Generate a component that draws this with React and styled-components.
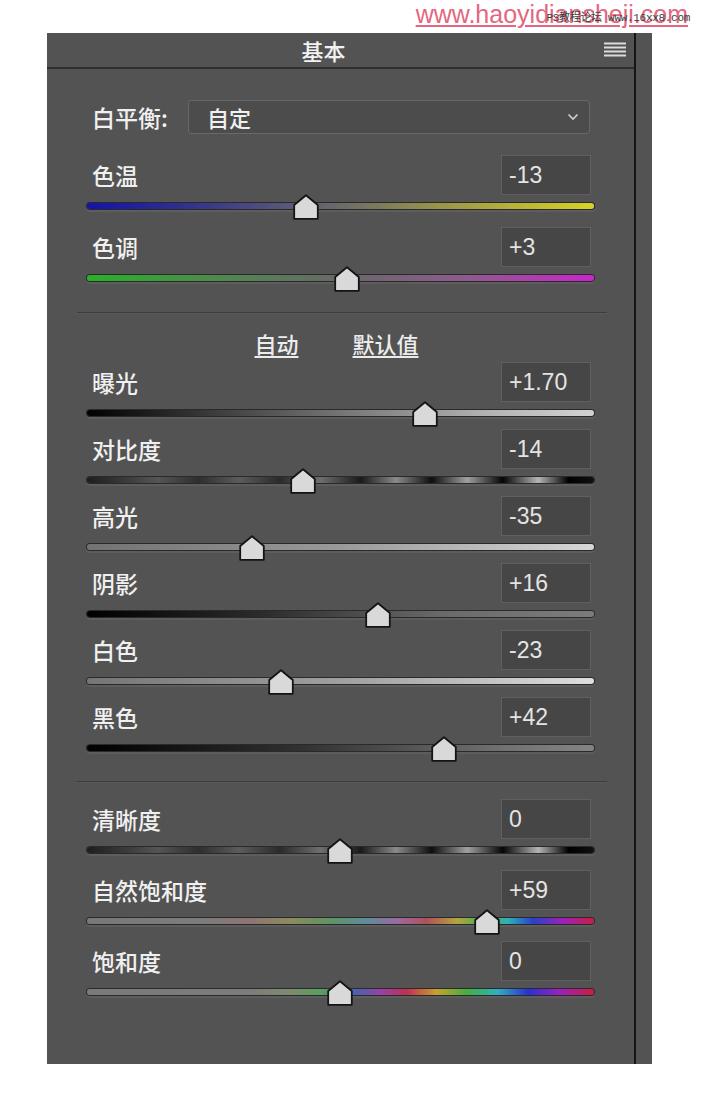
import React from 'react';
import styled, { createGlobalStyle } from 'styled-components';

const GlobalStyle = createGlobalStyle`
  body {
    margin: 0;
    background: #fff;
    font-family: "Noto Sans CJK SC", "Noto Sans", sans-serif;
  }
`;

const Page = styled.div`
  width: 704px;
  height: 1116px;
  background: #fff;
`;

const TopBar = styled.div`
  position: relative;
  height: 33px;
  display: flex;
  justify-content: flex-end;
  padding-right: 16px;
  box-sizing: border-box;
`;

const SiteMark = styled.div`
  font-family: "Liberation Sans", Arial, sans-serif;
  font-size: 25px;
  line-height: 29px;
  color: #e4677f;
  text-decoration: underline;
  text-decoration-thickness: 2px;
  text-underline-offset: 2px;
`;

const ForumMark = styled.div`
  position: absolute;
  right: 14px;
  top: 8px;
  font-family: "Liberation Mono", "Noto Sans CJK SC", monospace;
  font-size: 11px;
  color: #3c3c3c;
  letter-spacing: -0.3px;
`;

const Panel = styled.div`
  margin-left: 47px;
  width: 605px;
  display: flex;
  background: #535353;
`;

const Main = styled.div`
  width: 589px;
  box-sizing: border-box;
  border-right: 2px solid #161616;
  display: flex;
  flex-direction: column;
`;

const Strip = styled.div`
  flex: 1;
`;

const Header = styled.div`
  height: 34px;
  border-bottom: 2px solid #2e2e2e;
  display: flex;
  align-items: center;
`;

const Title = styled.div`
  flex: 1;
  text-align: center;
  font-size: 22px;
  color: #f2f2f2;
  font-weight: 500;
  padding-right: 4px;
`;

const MenuIcon = styled.svg`
  width: 22px;
  height: 16px;
  margin-right: 8px;
`;

const Body = styled.div`
  padding: 31px 40px 58px;
`;

const WBRow = styled.div`
  display: flex;
  align-items: center;
  height: 34px;
  padding: 0 4px 0 5px;
`;

const Label = styled.div`
  font-size: 23px;
  font-weight: 500;
  color: #f0f0f0;
  white-space: nowrap;
`;

const WBLabel = styled(Label)`
  width: 96px;
`;

const Dropdown = styled.div`
  flex: 1;
  height: 34px;
  box-sizing: border-box;
  border: 1px solid #686868;
  border-radius: 3px;
  background: #4c4c4c;
  display: flex;
  align-items: center;
  justify-content: space-between;
  padding: 0 10px 0 18px;
  font-size: 22px;
  font-weight: 500;
  color: #f0f0f0;
`;

const Sliders = styled.div`
  display: flex;
  flex-direction: column;
  gap: ${p => p.$gap}px;
  margin-top: ${p => p.$top}px;
`;

const Row = styled.div`
  display: flex;
  flex-direction: column;
`;

const RowHead = styled.div`
  display: flex;
  justify-content: space-between;
  align-items: center;
  height: 40px;
  padding: 0 3px 0 5px;
`;

const ValueBox = styled.div`
  width: 90px;
  height: 40px;
  box-sizing: border-box;
  background: #464646;
  border: 1px solid #606060;
  display: flex;
  align-items: center;
  padding-left: 7px;
  font-family: "Liberation Sans", Arial, sans-serif;
  font-size: 23px;
  color: #e4e4e4;
`;

const TrackWrap = styled.div`
  position: relative;
  height: 25px;
  padding-top: 8px;
  box-sizing: border-box;
`;

const Track = styled.div`
  height: 6px;
  border-radius: 3px;
  background: ${p => p.$bg};
  box-shadow: 0 0 0 1px #2a2a2a, 0 2px 0 1px rgba(255, 255, 255, 0.06);
`;

const Thumb = styled.svg`
  position: absolute;
  top: -1px;
  width: 26px;
  height: 26px;
  margin-left: -13px;
`;

const Divider = styled.div`
  height: 1px;
  margin: ${p => p.$top}px -13px 0 -10px;
  background: #3c3c3c;
  box-shadow: 0 1px 0 #5a5a5a;
`;

const Links = styled.div`
  margin-top: 18px;
  height: 24px;
  display: flex;
  justify-content: center;
  gap: 54px;
  padding-right: 8px;
`;

const Link = styled.span`
  font-size: 22px;
  line-height: 24px;
  font-weight: 500;
  color: #ececec;
  text-decoration: underline;
  text-underline-offset: 3px;
`;

const stripes =
  'linear-gradient(90deg, #1e1e1e 0%, #3c3c3c 8%, #555 14%, #2e2e2e 22%, #5c5c5c 30%, #2a2a2a 38%, #6e6e6e 46%, #1a1a1a 54%, #8a8a8a 61%, #0e0e0e 68%, #a0a0a0 75%, #050505 82%, #b4b4b4 89%, #000 95%, #111 100%)';

const rainbowVib =
  'linear-gradient(90deg, #787878 0%, #7c7c7c 22%, #8c7474 32%, #8e8a5e 40%, #5e9462 48%, #5e8c9a 55%, #9a6aa0 61%, #b0505a 67%, #b4a440 73%, #44b050 78%, #30b0b8 83%, #2a40c8 88%, #a020b8 94%, #c81e40 100%)';

const rainbowSat =
  'linear-gradient(90deg, #7a7a7a 0%, #7c7c7c 32%, #7e8a70 40%, #5aa05a 46%, #4a60b0 53%, #9a40a8 58%, #c03050 63%, #c8a030 69%, #40b040 75%, #30b0c0 81%, #2a30d0 87%, #9a20c0 93%, #c81e40 100%)';

const whiteBalance = [
  { label: '色温', value: '-13', pos: 43.2, bg: 'linear-gradient(90deg, #1414a8 0%, #2e2e90 18%, #55557a 38%, #6b6b68 50%, #9a964a 70%, #d8d226 100%)' },
  { label: '色调', value: '+3', pos: 51.3, bg: 'linear-gradient(90deg, #26b226 0%, #4a8e4a 22%, #686868 50%, #8e5a8e 75%, #cc24cc 100%)' },
];

const tone = [
  { label: '曝光', value: '+1.70', pos: 66.7, bg: 'linear-gradient(90deg, #000 0%, #3c3c3c 25%, #808080 55%, #b4b4b4 80%, #d2d2d2 100%)' },
  { label: '对比度', value: '-14', pos: 42.6, bg: stripes },
  { label: '高光', value: '-35', pos: 32.5, bg: 'linear-gradient(90deg, #727272 0%, #9a9a9a 50%, #d6d6d6 100%)' },
  { label: '阴影', value: '+16', pos: 57.4, bg: 'linear-gradient(90deg, #000 0%, #2c2c2c 35%, #6a6a6a 70%, #7c7c7c 100%)' },
  { label: '白色', value: '-23', pos: 38.3, bg: 'linear-gradient(90deg, #757575 0%, #a4a4a4 55%, #dedede 100%)' },
  { label: '黑色', value: '+42', pos: 70.4, bg: 'linear-gradient(90deg, #000 0%, #2e2e2e 40%, #6e6e6e 80%, #848484 100%)' },
];

const presence = [
  { label: '清晰度', value: '0', pos: 49.9, bg: stripes },
  { label: '自然饱和度', value: '+59', pos: 78.9, bg: rainbowVib },
  { label: '饱和度', value: '0', pos: 49.9, bg: rainbowSat },
];

const SliderRow = ({ label, value, pos, bg }) => (
  <Row>
    <RowHead>
      <Label>{label}</Label>
      <ValueBox>{value}</ValueBox>
    </RowHead>
    <TrackWrap>
      <Track $bg={bg} />
      <Thumb viewBox="0 0 26 26" style={{ left: `${pos}%` }}>
        <path
          d="M13 1.2 L24.8 11 V24.8 H1.2 V11 Z"
          fill="#d9d9d9"
          stroke="#141414"
          strokeWidth="1.8"
          strokeLinejoin="round"
        />
      </Thumb>
    </TrackWrap>
  </Row>
);

const App = () => (
  <Page>
    <GlobalStyle />
    <TopBar>
      <SiteMark>www.haoyidiansheji.com</SiteMark>
      <ForumMark>PS教程论坛 www.16xx8.com</ForumMark>
    </TopBar>
    <Panel>
      <Main>
        <Header>
          <Title>基本</Title>
          <MenuIcon viewBox="0 0 22 16">
            {[1.5, 5.5, 9.5, 13.5].map(y => (
              <rect key={y} x="0" y={y - 1} width="22" height="2" fill="#dcdcdc" />
            ))}
          </MenuIcon>
        </Header>
        <Body>
          <WBRow>
            <WBLabel>白平衡:</WBLabel>
            <Dropdown>
              自定
              <svg width="12" height="8" viewBox="0 0 12 8">
                <path d="M1.5 1.5 L6 6 L10.5 1.5" fill="none" stroke="#d0d0d0" strokeWidth="1.6" />
              </svg>
            </Dropdown>
          </WBRow>
          <Sliders $gap={7} $top={21}>
            {whiteBalance.map(s => <SliderRow key={s.label} {...s} />)}
          </Sliders>
          <Divider $top={20} />
          <Links>
            <Link>自动</Link>
            <Link>默认值</Link>
          </Links>
          <Sliders $gap={2} $top={7}>
            {tone.map(s => <SliderRow key={s.label} {...s} />)}
          </Sliders>
          <Divider $top={19} />
          <Sliders $gap={6} $top={17}>
            {presence.map(s => <SliderRow key={s.label} {...s} />)}
          </Sliders>
        </Body>
      </Main>
      <Strip />
    </Panel>
  </Page>
);

export default App;
